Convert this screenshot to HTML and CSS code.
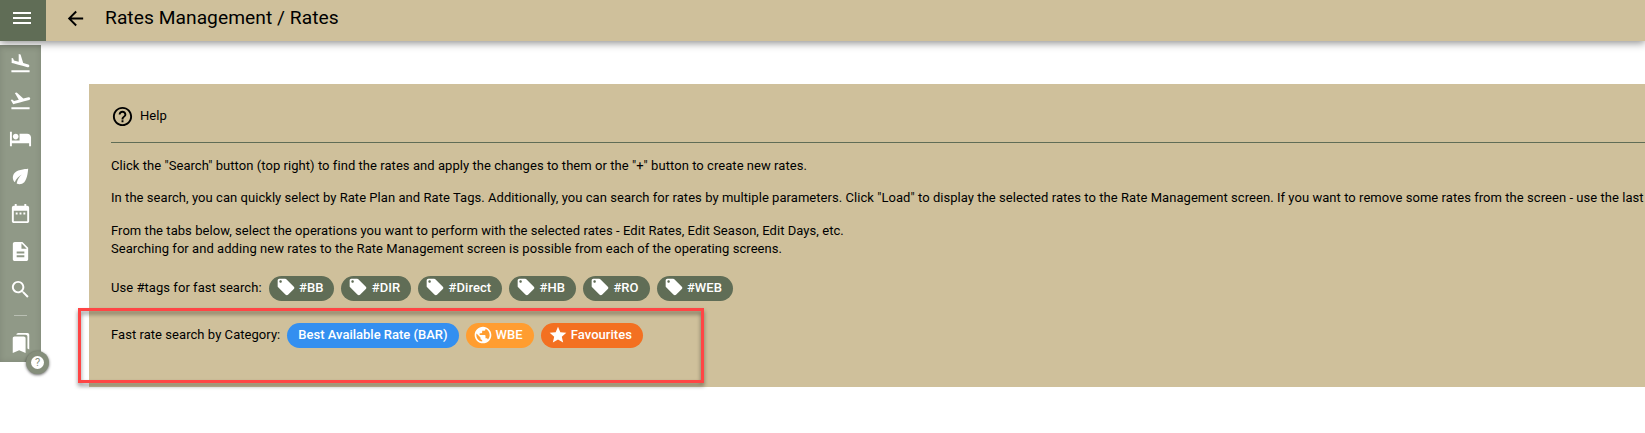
FILE: index.html
```html
<!DOCTYPE html>
<html lang="en">
<head>
    <meta charset="UTF-8">
    <meta name="viewport" content="width=device-width, initial-scale=1.0">
    <title>Rates Management / Rates</title>
    <link rel="stylesheet" href="styles.css">
</head>
<body>
    <svg class="sprite">
        <symbol id="tag" viewBox="0 0 24 24"><path d="M21.41 11.58l-9-9C12.05 2.22 11.55 2 11 2H4c-1.1 0-2 .9-2 2v7c0 .55.22 1.05.59 1.42l9 9c.36.36.86.58 1.41.58.55 0 1.05-.22 1.41-.59l7-7c.37-.36.59-.86.59-1.41 0-.55-.23-1.06-.59-1.42zM5.5 7C4.67 7 4 6.33 4 5.5S4.67 4 5.5 4 7 4.67 7 5.5 6.33 7 5.5 7z"/></symbol>
    </svg>

    <header class="topbar">
        <button class="menu-toggle" aria-label="Menu">
            <svg class="icon" viewBox="0 0 24 24"><path d="M3 18h18v-2H3v2zm0-5h18v-2H3v2zm0-7v2h18V6H3z"/></svg>
        </button>
        <svg class="icon back" viewBox="0 0 24 24"><path d="M20 11H7.83l5.59-5.59L12 4l-8 8 8 8 1.41-1.41L7.83 13H20v-2z"/></svg>
        <h1>Rates Management / Rates</h1>
    </header>

    <div class="layout">
        <nav class="sidebar">
            <a><svg class="icon" viewBox="0 0 24 24"><path d="M2.5 19h19v2h-19v-2zm7.18-5.73l4.35 1.16 5.31 1.42c.8.21 1.62-.26 1.84-1.06.21-.8-.26-1.62-1.06-1.84l-5.31-1.42-2.76-9.02L10.12 2v8.28L5.15 8.95l-.93-2.32-1.45-.39v5.17l1.6.43 5.31 1.43z"/></svg></a>
            <a><svg class="icon" viewBox="0 0 24 24"><path d="M2.5 19h19v2h-19v-2zm19.57-9.36c-.21-.8-1.04-1.28-1.84-1.06L14.92 10l-6.9-6.43-1.93.51 4.14 7.17-4.97 1.33-1.97-1.54-1.45.39 1.82 3.16.77 1.33 1.6-.43 5.31-1.42 4.35-1.16L21 11.49c.81-.23 1.28-1.05 1.07-1.85z"/></svg></a>
            <a><svg class="icon" viewBox="0 0 24 24"><path d="M7 13c1.66 0 3-1.34 3-3S8.66 7 7 7s-3 1.34-3 3 1.34 3 3 3zm12-6h-8v7H3V5H1v15h2v-3h18v3h2v-9c0-2.21-1.79-4-4-4z"/></svg></a>
            <a><svg class="icon" viewBox="0 0 24 24"><path d="M6.05 8.05c-2.73 2.73-2.73 7.15-.02 9.88 1.47-3.4 4.09-6.24 7.36-7.93-2.77 2.34-4.71 5.61-5.39 9.32 2.6 1.23 5.8.78 7.95-1.37C19.43 14.47 20 4 20 4S9.53 4.57 6.05 8.05z"/></svg></a>
            <a><svg class="icon" viewBox="0 0 24 24"><path d="M9 11H7v2h2v-2zm4 0h-2v2h2v-2zm4 0h-2v2h2v-2zm2-7h-1V2h-2v2H8V2H6v2H5c-1.11 0-1.99.9-1.99 2L3 20c0 1.1.89 2 2 2h14c1.1 0 2-.9 2-2V6c0-1.1-.9-2-2-2zm0 16H5V9h14v11z"/></svg></a>
            <a><svg class="icon" viewBox="0 0 24 24"><path d="M14 2H6c-1.1 0-1.99.9-1.99 2L4 20c0 1.1.89 2 1.99 2H18c1.1 0 2-.9 2-2V8l-6-6zm2 16H8v-2h8v2zm0-4H8v-2h8v2zm-3-5V3.500L18.500 9H13z"/></svg></a>
            <a><svg class="icon" viewBox="0 0 24 24"><path d="M15.500 14h-.79l-.28-.27C15.410 12.590 16 11.110 16 9.500 16 5.910 13.090 3 9.500 3S3 5.910 3 9.500 5.910 16 9.500 16c1.610 0 3.090-.59 4.230-1.570l.27.28v.79l5 4.990L20.490 19l-4.990-5zm-6 0C7.010 14 5 11.990 5 9.500S7.010 5 9.500 5 14 7.010 14 9.500 11.990 14 9.500 14z"/></svg></a>
            <hr>
            <a><svg class="icon small" viewBox="0 0 24 24"><path d="M19 18l2 1V3c0-1.100-.9-2-2-2H8.990C7.890 1 7 1.900 7 3h10c1.100 0 2 .9 2 2v13zM15 5H5c-1.100 0-2 .9-2 2v16l7-3 7 3V7c0-1.100-.9-2-2-2z"/></svg></a>
            <button class="help-badge" aria-label="Help"><span>?</span></button>
        </nav>

        <main class="content">
            <section class="help-card">
                <div class="help-title">
                    <svg class="icon" viewBox="0 0 24 24"><path d="M11 18h2v-2h-2v2zm1-16C6.480 2 2 6.480 2 12s4.480 10 10 10 10-4.480 10-10S17.520 2 12 2zm0 18c-4.410 0-8-3.590-8-8s3.590-8 8-8 8 3.590 8 8-3.590 8-8 8zm0-14c-2.210 0-4 1.790-4 4h2c0-1.100.9-2 2-2s2 .9 2 2c0 2-3 1.750-3 5h2c0-2.250 3-2.500 3-5 0-2.210-1.790-4-4-4z"/></svg>
                    <span>Help</span>
                </div>
                <p>Click the "Search" button (top right) to find the rates and apply the changes to them or the "+" button to create new rates.</p>
                <p>In the search, you can quickly select by Rate Plan and Rate Tags. Additionally, you can search for rates by multiple parameters. Click "Load" to display the selected rates to the Rate Management screen. If you want to remove some rates from the screen - use the last</p>
                <p>From the tabs below, select the operations you want to perform with the selected rates - Edit Rates, Edit Season, Edit Days, etc.<br>Searching for and adding new rates to the Rate Management screen is possible from each of the operating screens.</p>
                <div class="chips tags">
                    <span class="label">Use #tags for fast search:</span>
                    <span class="chip"><svg class="icon"><use href="#tag"/></svg>#BB</span>
                    <span class="chip"><svg class="icon"><use href="#tag"/></svg>#DIR</span>
                    <span class="chip"><svg class="icon"><use href="#tag"/></svg>#Direct</span>
                    <span class="chip"><svg class="icon"><use href="#tag"/></svg>#HB</span>
                    <span class="chip"><svg class="icon"><use href="#tag"/></svg>#RO</span>
                    <span class="chip"><svg class="icon"><use href="#tag"/></svg>#WEB</span>
                </div>
                <div class="chips">
                    <span class="label">Fast rate search by Category:</span>
                    <span class="chip bar">Best Available Rate (BAR)</span>
                    <span class="chip wbe"><svg class="icon" viewBox="0 0 24 24"><path d="M12 2C6.480 2 2 6.480 2 12s4.480 10 10 10 10-4.480 10-10S17.520 2 12 2zm-1 17.930c-3.950-.49-7-3.850-7-7.930 0-.62.080-1.210.21-1.790L9 15v1c0 1.100.9 2 2 2v1.930zm6.900-2.540c-.26-.81-1-1.390-1.900-1.390h-1v-3c0-.55-.45-1-1-1H8v-2h2c.55 0 1-.45 1-1V7h2c1.100 0 2-.9 2-2v-.41c2.930 1.190 5 4.060 5 7.410 0 2.080-.8 3.970-2.100 5.390z"/></svg>WBE</span>
                    <span class="chip favourites"><svg class="icon" viewBox="0 0 24 24"><path d="M12 17.270L18.180 21l-1.640-7.030L22 9.240l-7.190-.61L12 2 9.190 8.630 2 9.240l5.460 4.730L5.820 21z"/></svg>Favourites</span>
                </div>
                <div class="highlight"></div>
            </section>
        </main>
    </div>
</body>
</html>
```
FILE: styles.css
```css
body {
    margin: 0;
    height: 433px;
    overflow: hidden;
    background: #fff;
    color: #000;
    font-family: Roboto, sans-serif;
    font-size: 13px;
    line-height: 18px;
    letter-spacing: 0.052px;
}
button {
    padding: 0;
    border: none;
    font: inherit;
    color: #fff;
}
.sprite {
    display: none;
}
.icon {
    width: 23px;
    height: 23px;
    flex: none;
    fill: currentColor;
}
.icon.small {
    width: 22px;
    height: 22px;
}
.topbar {
    position: relative;
    z-index: 1;
    display: flex;
    align-items: center;
    height: 41px;
    background: #cfc09b;
    box-shadow: 0 2px 8px rgba(0, 0, 0, 0.45);
}
.menu-toggle {
    display: flex;
    align-items: center;
    justify-content: center;
    width: 46px;
    height: 41px;
    padding: 0 2px 5px 0;
    box-sizing: border-box;
    background: #606d56;
}
.menu-toggle .icon {
    width: 24px;
    height: 24px;
}
.back {
    margin: 0 18px 5px 18px;
}
h1 {
    margin: 0 0 5px;
    font-size: 19.2px;
    font-weight: 400;
    line-height: 24px;
}
.layout {
    display: flex;
    align-items: flex-start;
    padding-top: 4px;
}
.sidebar {
    position: relative;
    display: flex;
    flex-direction: column;
    align-items: center;
    flex: none;
    width: 41px;
    height: 317px;
    background: #909987;
    color: #fff;
    box-shadow: inset 0 0 6px rgba(0, 0, 0, 0.12);
}
.sidebar a {
    display: flex;
    align-items: center;
    height: 37.75px;
}
.sidebar a:first-child {
    margin-top: -0.8px;
}
.sidebar hr {
    width: 13px;
    height: 1px;
    margin: 7px 0 8px;
    border: none;
    background: #b9bfb3;
}
.help-badge {
    position: absolute;
    right: -8px;
    bottom: -12px;
    display: flex;
    align-items: center;
    justify-content: center;
    width: 23px;
    height: 23px;
    border-radius: 50%;
    background: #858e7b;
    box-shadow: 0 1px 3px rgba(0, 0, 0, 0.6);
}
.help-badge span {
    width: 13px;
    height: 13px;
    border-radius: 50%;
    background: #fff;
    color: #858e7b;
    font-size: 11px;
    line-height: 13px;
    text-align: center;
}
.content {
    flex: 1;
    min-width: 0;
    padding: 39px 0 0 48px;
}
.help-card {
    position: relative;
    height: 303px;
    box-sizing: border-box;
    padding: 22px 0 0 22px;
    background: #cfc09b;
    white-space: nowrap;
}
.help-title {
    display: flex;
    align-items: flex-start;
    gap: 6px;
    height: 35px;
    padding-top: 1px;
    margin-bottom: 14px;
    border-bottom: 1px solid #606d56;
}
.help-title .icon {
    margin-top: -2px;
}
p {
    margin: 0 0 14.4px;
}
.chips {
    display: flex;
    align-items: center;
    gap: 7px;
    height: 25px;
}
.chips.tags {
    margin: 18px 0 22px;
}
.chip {
    display: flex;
    align-items: center;
    height: 25px;
    padding: 0 11px 0 7px;
    box-sizing: border-box;
    border-radius: 13px;
    background: #606d56;
    color: #fff;
    font-weight: 500;
}
.chip .icon {
    width: 20px;
    height: 20px;
    margin: -2px 3px 0 0;
}
.tags .chip .icon {
    margin-right: 3.4px;
}
.chip.bar {
    padding-left: 11px;
    background: #338ff0;
    letter-spacing: 0;
}
.chip.wbe {
    background: #ff9d30;
}
.chip.favourites {
    background: #f37021;
}
.chip.wbe .icon,
.chip.favourites .icon {
    margin-top: -1px;
}
/* callout frame drawn over the category row */
.highlight {
    position: absolute;
    left: -11px;
    top: 224px;
    width: 620px;
    height: 69px;
    border: 3px solid #ff4545;
    filter: drop-shadow(0 3px 2px rgba(0, 0, 0, 0.45));
}
```
